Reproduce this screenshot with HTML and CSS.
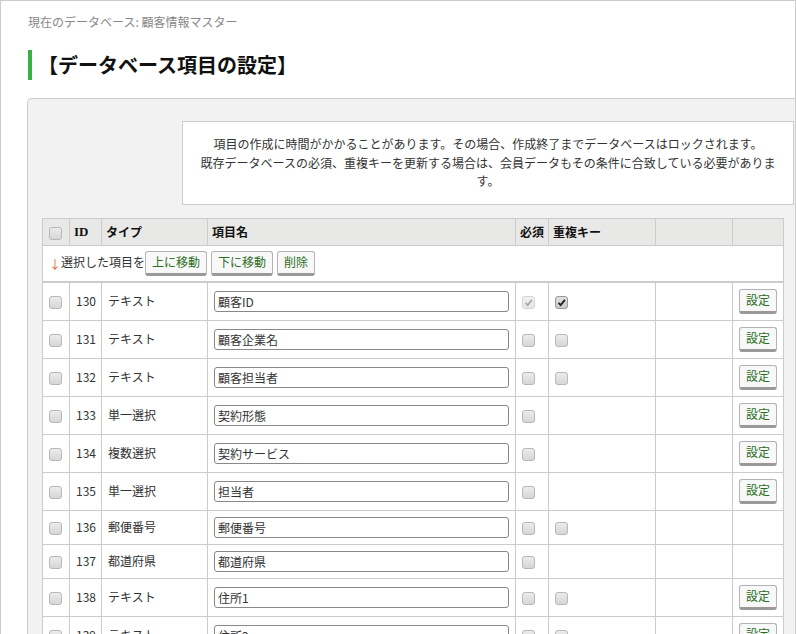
FILE: index.html
```html
<!DOCTYPE html>
<html lang="ja">
  <head>
    <meta charset="UTF-8" />
    <meta name="viewport" content="width=device-width, initial-scale=1.0" />
    <title>データベース項目の設定</title>
    <link rel="stylesheet" href="styles.css">
  </head>
  <body>
    <div class="frame">
      <p class="breadcrumb">現在のデータベース: 顧客情報マスター</p>
      <h1 class="page-title">【データベース項目の設定】</h1>

      <div class="panel">
        <div class="notice">
          項目の作成に時間がかかることがあります。その場合、作成終了までデータベースはロックされます。<br />
          既存データベースの必須、重複キーを更新する場合は、会員データもその条件に合致している必要があります。
        </div>

        <table class="fields">
          <colgroup>
            <col style="width: 27px" />
            <col style="width: 32px" />
            <col style="width: 106px" />
            <col style="width: 308px" />
            <col style="width: 33px" />
            <col style="width: 107px" />
            <col style="width: 77px" />
            <col style="width: 51px" />
          </colgroup>
          <thead>
            <tr>
              <th><span class="chk"></span></th>
              <th class="id-head">ID</th>
              <th>タイプ</th>
              <th>項目名</th>
              <th>必須</th>
              <th>重複キー</th>
              <th></th>
              <th></th>
            </tr>
          </thead>
          <tbody>
            <tr class="actions">
              <td colspan="8">
                <span class="arrow">↓</span>選択した項目を<button class="btn">上に移動</button><button class="btn">下に移動</button><button class="btn">削除</button>
              </td>
            </tr>
            <tr class="has-btn">
              <td><span class="chk"></span></td>
              <td>130</td>
              <td>テキスト</td>
              <td><input class="name" type="text" value="顧客ID" /></td>
              <td><span class="chk disabled"><svg viewBox="0 0 13 13"><path d="M3 7 L5.5 9.5 L10.5 3.5" /></svg></span></td>
              <td><span class="chk checked"><svg viewBox="0 0 13 13"><path d="M3 7 L5.5 9.5 L10.5 3.5" /></svg></span></td>
              <td></td>
              <td><button class="btn">設定</button></td>
            </tr>
            <tr class="has-btn">
              <td><span class="chk"></span></td>
              <td>131</td>
              <td>テキスト</td>
              <td><input class="name" type="text" value="顧客企業名" /></td>
              <td><span class="chk"></span></td>
              <td><span class="chk"></span></td>
              <td></td>
              <td><button class="btn">設定</button></td>
            </tr>
            <tr class="has-btn">
              <td><span class="chk"></span></td>
              <td>132</td>
              <td>テキスト</td>
              <td><input class="name" type="text" value="顧客担当者" /></td>
              <td><span class="chk"></span></td>
              <td><span class="chk"></span></td>
              <td></td>
              <td><button class="btn">設定</button></td>
            </tr>
            <tr class="has-btn">
              <td><span class="chk"></span></td>
              <td>133</td>
              <td>単一選択</td>
              <td><input class="name" type="text" value="契約形態" /></td>
              <td><span class="chk"></span></td>
              <td></td>
              <td></td>
              <td><button class="btn">設定</button></td>
            </tr>
            <tr class="has-btn">
              <td><span class="chk"></span></td>
              <td>134</td>
              <td>複数選択</td>
              <td><input class="name" type="text" value="契約サービス" /></td>
              <td><span class="chk"></span></td>
              <td></td>
              <td></td>
              <td><button class="btn">設定</button></td>
            </tr>
            <tr class="has-btn">
              <td><span class="chk"></span></td>
              <td>135</td>
              <td>単一選択</td>
              <td><input class="name" type="text" value="担当者" /></td>
              <td><span class="chk"></span></td>
              <td></td>
              <td></td>
              <td><button class="btn">設定</button></td>
            </tr>
            <tr>
              <td><span class="chk"></span></td>
              <td>136</td>
              <td>郵便番号</td>
              <td><input class="name" type="text" value="郵便番号" /></td>
              <td><span class="chk"></span></td>
              <td><span class="chk"></span></td>
              <td></td>
              <td></td>
            </tr>
            <tr>
              <td><span class="chk"></span></td>
              <td>137</td>
              <td>都道府県</td>
              <td><input class="name" type="text" value="都道府県" /></td>
              <td><span class="chk"></span></td>
              <td></td>
              <td></td>
              <td></td>
            </tr>
            <tr class="has-btn">
              <td><span class="chk"></span></td>
              <td>138</td>
              <td>テキスト</td>
              <td><input class="name" type="text" value="住所1" /></td>
              <td><span class="chk"></span></td>
              <td><span class="chk"></span></td>
              <td></td>
              <td><button class="btn">設定</button></td>
            </tr>
            <tr class="has-btn">
              <td><span class="chk"></span></td>
              <td>139</td>
              <td>テキスト</td>
              <td><input class="name" type="text" value="住所2" /></td>
              <td><span class="chk"></span></td>
              <td><span class="chk"></span></td>
              <td></td>
              <td><button class="btn">設定</button></td>
            </tr>
          </tbody>
        </table>
      </div>
    </div>
  </body>
</html>
```

FILE: styles.css
```css
body {
  margin: 0;
  font-family: "Noto Sans CJK JP", "Noto Sans", sans-serif;
  font-size: 12px;
  color: #333;
  background: #fff;
}

.frame {
  box-sizing: border-box;
  width: 796px;
  height: 634px;
  border: 1px solid #ccc;
  border-bottom: none;
  padding: 12px 0 0 26px;
  overflow: hidden;
}

.breadcrumb {
  margin: 0 0 0 1px;
  line-height: 18px;
  color: #888;
}

.page-title {
  margin: 19px 0 18px 1px;
  padding-left: 6px;
  border-left: 4px solid #3cb043;
  font-size: 20px;
  line-height: 30px;
  color: #111;
}

.panel {
  width: 800px;
  padding: 22px 0 20px 14px;
  background: #f2f2f2;
  border: 1px solid #ccc;
  border-right: none;
  border-radius: 5px 0 0 0;
}

.notice {
  box-sizing: border-box;
  width: 612px;
  margin: 0 0 13px 140px;
  padding: 13px 10px;
  background: #fff;
  border: 1px solid #ccc;
  text-align: center;
  line-height: 18.5px;
}

.fields {
  width: 741px;
  table-layout: fixed;
  border-collapse: collapse;
  background: #fff;
}

.fields th,
.fields td {
  border: 1px solid #ccc;
  padding: 6px 6px;
  text-align: left;
  vertical-align: middle;
  line-height: 18px;
  white-space: nowrap;
}

.fields th {
  padding: 4px 4px;
  background: #e8e8e6;
  color: #111;
  font-weight: bold;
}

.fields th:first-child,
.fields td:first-child {
  padding-left: 6px;
}

.id-head {
  font-family: "Liberation Serif", serif;
  font-size: 13px;
}

.actions td {
  padding: 5px 5px;
  border-bottom: 2px solid #ccc;
}

.actions td > * {
  vertical-align: middle;
}

.arrow {
  color: #e8663d;
}

.btn {
  height: 25px;
  margin: 0 4px 0 0;
  padding: 0 6px;
  font-family: inherit;
  font-size: 12px;
  color: #2a6e1e;
  background: #f8f8f8;
  border: 1px solid #b3b3b3;
  border-bottom: 3px solid #999;
  border-radius: 3px;
  line-height: 18px;
  cursor: pointer;
}

.has-btn td:last-child {
  padding-left: 6px;
}

.has-btn td:last-child .btn {
  margin: 0;
}

.name {
  box-sizing: border-box;
  width: 100%;
  height: 21px;
  margin: 0;
  padding: 0 3px;
  font-family: inherit;
  font-size: 12px;
  color: #333;
  border: 1px solid #888;
  border-radius: 3px;
  display: block;
}

.chk {
  box-sizing: border-box;
  display: inline-block;
  width: 13px;
  height: 13px;
  vertical-align: middle;
  border: 1px solid #b8b8b8;
  border-radius: 3px;
  background: linear-gradient(#ececec, #d6d6d6);
}

.chk svg {
  display: block;
  width: 11px;
  height: 11px;
}

.chk path {
  fill: none;
  stroke-width: 2.2;
}

.chk.checked {
  border-color: #999;
  background: linear-gradient(#e0e0e0, #c8c8c8);
}

.chk.checked path {
  stroke: #222;
}

.chk.disabled {
  border-color: #d4d4d4;
  background: linear-gradient(#f2f2f2, #e6e6e6);
}

.chk.disabled path {
  stroke: #aaa;
}
```
